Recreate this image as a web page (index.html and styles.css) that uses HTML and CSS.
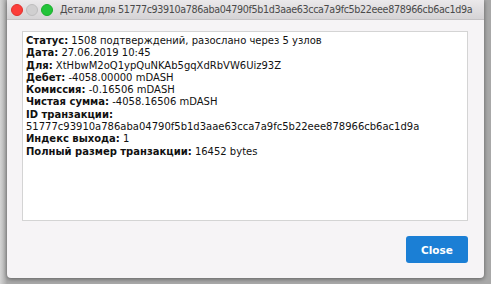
FILE: index.html
```html
<!DOCTYPE html>
<html lang="ru">

<head>
  <meta charset="UTF-8">
  <meta name="viewport" content="width=device-width, initial-scale=1.0">
  <title>Детали транзакции</title>
  <link rel="stylesheet" href="styles.css">
</head>

<body>
  <div class="window">
    <div class="titlebar">
      <div class="lights">
        <span class="light red"></span>
        <span class="light gray"></span>
        <span class="light green"></span>
      </div>
      <div class="title">Детали для 51777c93910a786aba04790f5b1d3aae63cca7a9fc5b22eee878966cb6ac1d9a</div>
    </div>
    <div class="content">
      <div class="details">
        <div><b>Статус:</b> 1508 подтверждений, разослано через 5 узлов</div>
        <div><b>Дата:</b> 27.06.2019 10:45</div>
        <div><b>Для:</b> XtHbwM2oQ1ypQuNKAb5gqXdRbVW6Uiz93Z</div>
        <div><b>Дебет:</b> -4058.00000 mDASH</div>
        <div><b>Комиссия:</b> -0.16506 mDASH</div>
        <div><b>Чистая сумма:</b> -4058.16506 mDASH</div>
        <div><b>ID транзакции:</b></div>
        <div>51777c93910a786aba04790f5b1d3aae63cca7a9fc5b22eee878966cb6ac1d9a</div>
        <div><b>Индекс выхода:</b> 1</div>
        <div><b>Полный размер транзакции:</b> 16452 bytes</div>
      </div>
      <div class="actions">
        <button class="btn-close">Close</button>
      </div>
    </div>
  </div>
</body>

</html>
```

FILE: styles.css
```css
* {
  box-sizing: border-box;
}

body {
  margin: 0;
  height: 284px;
  background: linear-gradient(to right, #d4d4d4, #a8a8a8 7px);
  overflow: hidden;
}

.window {
  margin-left: 7px;
  width: 477px;
  height: 278px;
  background: #f6f4f6;
  border-radius: 0 0 4px 4px;
  box-shadow: 0 1px 4px rgba(0, 0, 0, 0.45);
  display: flex;
  flex-direction: column;
}

.titlebar {
  height: 20px;
  background: linear-gradient(#ebe9eb, #d5d3d5);
  border-bottom: 1px solid #c4c2c4;
  display: flex;
  align-items: center;
  padding-left: 4px;
  overflow: hidden;
}

.lights {
  display: flex;
  gap: 3px;
}

.light {
  width: 12px;
  height: 12px;
  border-radius: 50%;
}

.red {
  background: #fc3d3a;
  border: 1px solid #e0302c;
}

.gray {
  background: #d0cfd0;
  border: 1px solid #bebdbe;
}

.green {
  background: #23c43a;
  border: 1px solid #1aad2c;
}

.title {
  margin-left: 7px;
  font-family: "DejaVu Sans", sans-serif;
  font-size: 9.6px;
  letter-spacing: -0.36px;
  color: #4a4a4a;
  white-space: nowrap;
}

.content {
  flex: 1;
  display: flex;
  flex-direction: column;
  padding: 11px 16px 0 15px;
}

.details {
  height: 190px;
  background: #fff;
  border: 1px solid #d4d4d4;
  padding: 3px 3px;
  font-family: "DejaVu Sans", sans-serif;
  font-size: 10px;
  line-height: 12.3px;
  color: #111;
}

.actions {
  display: flex;
  justify-content: flex-end;
  padding-top: 15px;
}

.btn-close {
  width: 62px;
  height: 27px;
  border: none;
  border-radius: 3px;
  background: #1b7fd5;
  color: #fff;
  font-family: "DejaVu Sans", sans-serif;
  font-size: 10.5px;
  font-weight: bold;
}
```
